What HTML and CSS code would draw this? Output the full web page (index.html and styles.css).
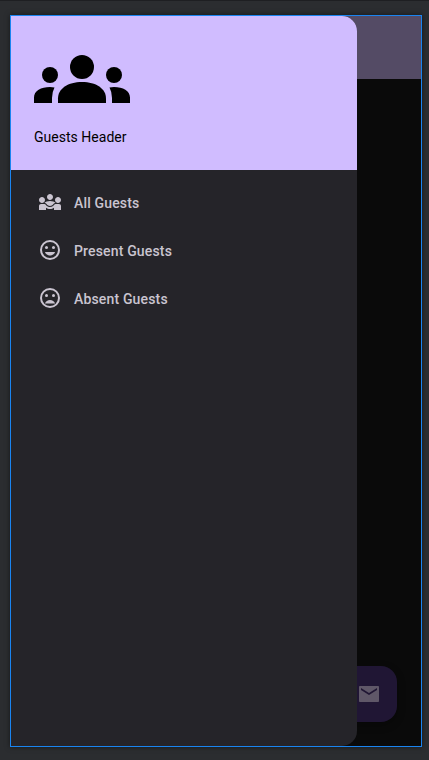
FILE: index.html
```html
<!DOCTYPE html>
<html lang="en">
<head>
<meta charset="utf-8">
<title>Guests</title>
<link rel="stylesheet" href="styles.css">
</head>
<body>
<main class="device">
  <div class="screen">
    <header class="app-bar"></header>
    <button class="fab" aria-label="Email">
      <svg class="icon" viewBox="0 0 24 24"><path d="M21 4H3c-.55 0-1 .45-1 1v14c0 .55.45 1 1 1h18c.55 0 1-.45 1-1V5c0-.55-.45-1-1-1zm-1 4l-8 5-8-5V6l8 5 8-5v2z"/></svg>
    </button>
  </div>
  <aside class="drawer">
    <div class="drawer-header">
      <svg class="header-icon" viewBox="0 0 96 48">
        <circle cx="48" cy="12" r="12"/>
        <circle cx="16" cy="20" r="8"/>
        <circle cx="80" cy="20" r="8"/>
        <path d="M24 48v-4.5C24 33.5 34 27 48 27s24 6.500 24 16.500V48z"/>
        <path d="M0 48v-5.500C0 36 7 32 16 32q2.500 0 4.500.4Q18 37 18 43v5z"/>
        <path d="M96 48v-5.500C96 36 89 32 80 32q-2.500 0-4.500.4Q78 37 78 43v5z"/>
      </svg>
      <div class="header-title">Guests Header</div>
    </div>
    <nav class="menu">
      <a class="item">
        <svg class="icon" viewBox="0 0 24 24"><path d="M6.320 13.010c.96.020 1.850.5 2.450 1.340C9.500 15.380 10.710 16 12 16s2.500-.62 3.230-1.660c.6-.84 1.490-1.320 2.450-1.340C16.960 11.780 14.080 11 12 11s-4.960.78-5.680 2.010zM4 13c1.660 0 3-1.340 3-3s-1.340-3-3-3-3 1.340-3 3 1.340 3 3 3zM20 13c1.660 0 3-1.340 3-3s-1.340-3-3-3-3 1.340-3 3 1.340 3 3 3zM12 10c1.660 0 3-1.340 3-3s-1.340-3-3-3-3 1.340-3 3 1.340 3 3 3zM21 14h-3.270c-.77 0-1.350.45-1.680.92C16.010 14.980 14.690 17 12 17c-1.430 0-3.030-.64-4.050-2.080C7.560 14.370 6.950 14 6.270 14H3c-1.100 0-2 .9-2 2v4h7v-2.260c1.150.8 2.540 1.260 4 1.260s2.850-.46 4-1.260V20h7v-4c0-1.100-.9-2-2-2z"/></svg>
        <span class="label">All Guests</span>
      </a>
      <a class="item">
        <svg class="icon" viewBox="0 0 24 24"><circle class="ring" cx="12" cy="12" r="9"/><circle cx="8.500" cy="9.500" r="1.500"/><circle cx="15.500" cy="9.500" r="1.500"/><path d="M6.900 14h10.200c-.8 2.040-2.780 3.500-5.100 3.500S7.700 16.040 6.900 14z"/></svg>
        <span class="label">Present Guests</span>
      </a>
      <a class="item">
        <svg class="icon" viewBox="0 0 24 24"><circle class="ring" cx="12" cy="12" r="9"/><circle cx="8.500" cy="9.500" r="1.500"/><circle cx="15.500" cy="9.500" r="1.500"/><path d="M6.900 17.500h10.200c-.8-2.040-2.780-3.500-5.100-3.500s-4.300 1.460-5.100 3.500z"/></svg>
        <span class="label">Absent Guests</span>
      </a>
    </nav>
  </aside>
</main>
</body>
</html>
```
FILE: styles.css
```css
* { box-sizing: border-box; }

body {
  margin: 0;
  height: 760px;
  padding: 14px 7px 13px 10px;
  overflow: hidden;
  background: #2b2d30;
  border-top: 1px solid #1e1f22;
  font-family: Roboto, "Liberation Sans", sans-serif;
}

.device {
  position: relative;
  width: 412px;
  height: 732px;
  border: 1px solid #1a84f0;
  background: #0a0a0a;
  box-shadow: 0 0 5px rgba(0, 0, 0, .5);
  overflow: hidden;
}

.screen {
  display: flex;
  flex-direction: column;
  justify-content: space-between;
  height: 100%;
}

.app-bar {
  height: 63px;
  background: #544b65;
}

.fab {
  display: flex;
  align-items: center;
  justify-content: center;
  align-self: flex-end;
  width: 56px;
  height: 56px;
  margin: 0 24px 24px 0;
  padding: 0;
  border: 0;
  border-radius: 16px;
  background: #201634;
  color: #5f5768;
  box-shadow: 0 3px 8px rgba(0, 0, 0, .3);
}

.icon {
  display: block;
  width: 24px;
  height: 24px;
  fill: currentColor;
}

.ring {
  fill: none;
  stroke: currentColor;
  stroke-width: 2;
}

/* The open drawer lies over the dimmed screen. */
.drawer {
  position: absolute;
  top: 0;
  bottom: 0;
  left: 0;
  width: 346px;
  overflow: hidden;
  border-radius: 0 15px 15px 0;
  background: #252429;
  color: #cac4d0;
}

.drawer-header {
  height: 154px;
  padding: 39px 23px 0;
  background: #d0bcff;
  color: #000;
}

.header-icon {
  display: block;
  width: 96px;
  height: 48px;
}

.header-title {
  margin-top: 24px;
  font-size: 14px;
  line-height: 20px;
  letter-spacing: .02px;
}

.menu { padding-top: 8px; }

.item {
  display: flex;
  align-items: center;
  gap: 12px;
  height: 48px;
  padding-left: 27px;
}

.label {
  padding-top: 2px;
  font-size: 14px;
  font-weight: 500;
  line-height: 20px;
  letter-spacing: .16px;
}
```
